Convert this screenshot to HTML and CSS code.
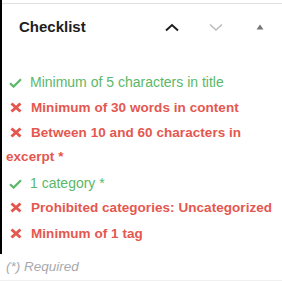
FILE: index.html
```html
<!DOCTYPE html>
<html lang="en">
<head>
  <meta charset="UTF-8">
  <meta name="viewport" content="width=device-width, initial-scale=1.0">
  <title>Checklist</title>
  <link rel="stylesheet" href="styles.css">
</head>
<body>
  <div class="panel">
    <div class="panel-header">
      <h2 class="panel-title">Checklist</h2>
      <div class="panel-actions">
        <button class="icon-btn">
          <svg width="24" height="24" viewBox="0 0 24 24"><path d="M6 15.5 12 10l6 5.5" fill="none" stroke="#1e1e1e" stroke-width="2"/></svg>
        </button>
        <button class="icon-btn">
          <svg width="24" height="24" viewBox="0 0 24 24"><path d="M6 9.5 12 15l6-5.5" fill="none" stroke="#bbb" stroke-width="1.5"/></svg>
        </button>
        <button class="icon-btn">
          <svg width="24" height="24" viewBox="0 0 24 24"><path d="M8.5 14.5 12 9.5l3.5 5z" fill="#777"/></svg>
        </button>
      </div>
    </div>

    <ul class="checklist">
      <li class="ok"><svg class="mark" width="13" height="10" viewBox="0 0 13 10"><path d="M1 5.2l3.6 3.4L12 1.2" fill="none" stroke="currentColor" stroke-width="2.2"/></svg>Minimum of 5 characters in title</li>
      <li class="fail"><svg class="mark" width="12" height="11" viewBox="0 0 12 11"><path d="M1.5 1.5l9 8M10.5 1.5l-9 8" fill="none" stroke="currentColor" stroke-width="3"/></svg>Minimum of 30 words in content</li>
      <li class="fail"><svg class="mark" width="12" height="11" viewBox="0 0 12 11"><path d="M1.5 1.5l9 8M10.5 1.5l-9 8" fill="none" stroke="currentColor" stroke-width="3"/></svg>Between 10 and 60 characters in excerpt *</li>
      <li class="ok"><svg class="mark" width="13" height="10" viewBox="0 0 13 10"><path d="M1 5.2l3.6 3.4L12 1.2" fill="none" stroke="currentColor" stroke-width="2.2"/></svg>1 category *</li>
      <li class="fail"><svg class="mark" width="12" height="11" viewBox="0 0 12 11"><path d="M1.5 1.5l9 8M10.5 1.5l-9 8" fill="none" stroke="currentColor" stroke-width="3"/></svg>Prohibited categories: Uncategorized</li>
      <li class="fail"><svg class="mark" width="12" height="11" viewBox="0 0 12 11"><path d="M1.5 1.5l9 8M10.5 1.5l-9 8" fill="none" stroke="currentColor" stroke-width="3"/></svg>Minimum of 1 tag</li>
    </ul>

    <p class="note">(*) Required</p>
  </div>
</body>
</html>
```

FILE: styles.css
```css
* {
  margin: 0;
  padding: 0;
  box-sizing: border-box;
  font-family: "Liberation Sans", Arial, sans-serif;
}

body {
  background: #fff;
  color: #1e1e1e;
}

.panel {
  position: relative;
  width: 282px;
  height: 281px;
  border-top: 2px solid #fff;
  padding-top: 1px;
}

/* dark edge of the neighbouring pane */
.panel::before {
  content: "";
  position: absolute;
  left: 0;
  top: -2px;
  width: 2px;
  height: 254px;
  background: #000;
}

.panel-header {
  display: flex;
  align-items: center;
  justify-content: space-between;
  height: 46px;
  padding: 0 10px 0 19px;
  border-top: 1px solid #e0e0e0;
}

.panel-title {
  font-size: 15px;
  font-weight: 600;
  color: #1e1e1e;
}

.panel-actions {
  display: flex;
  gap: 20px;
}

.icon-btn {
  border: none;
  background: none;
  width: 24px;
  height: 24px;
}

.icon-btn svg {
  display: block;
}

.checklist {
  list-style: none;
  padding: 21px 2px 0 6px;
}

.checklist li {
  font-size: 14px;
  line-height: 24px;
  margin-bottom: 1.5px;
}

.checklist .mark {
  display: inline-block;
  margin: 0 9px 0 4px;
  vertical-align: -1px;
}

.checklist .ok {
  color: #5bb868;
}

.checklist .ok .mark {
  margin: 0 8px 0 3px;
}

.checklist .fail {
  color: #e4574f;
  font-size: 13.5px;
  font-weight: 700;
  letter-spacing: 0.05px;
}

.note {
  margin-top: 13px;
  padding: 0 0 6px 6px;
  font-size: 13.5px;
  font-style: italic;
  color: #a7aaad;
  border-bottom: 1px solid #f0f0f0;
}
```
